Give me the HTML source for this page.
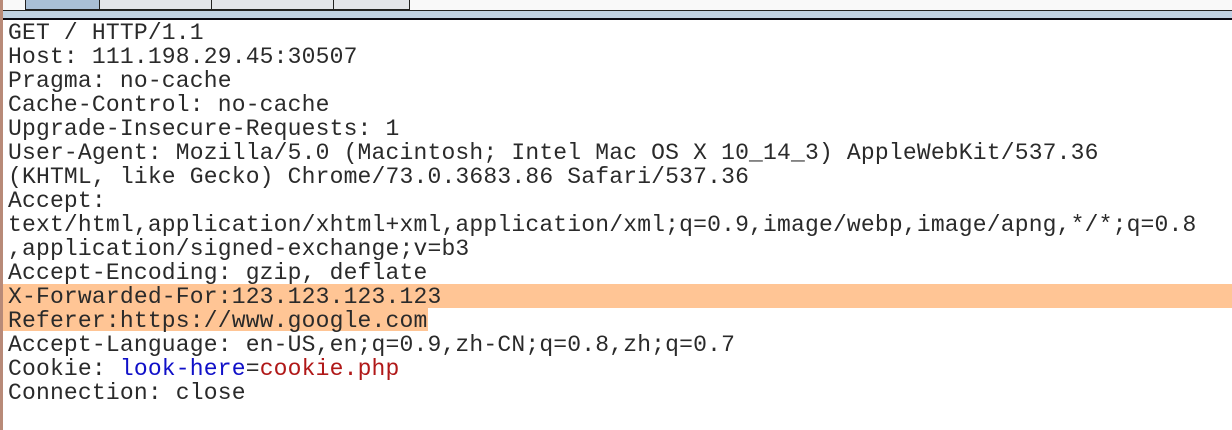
<!DOCTYPE html>
<html><head><style>
body{margin:0;width:1232px;height:430px;background:#fff;position:relative;overflow:hidden}
.top{position:absolute;left:0;top:0;width:1232px;height:10px;background:#f9f9f9}
.bl{position:absolute;left:0;top:10px;width:1232px;height:1px;background:#222}
.band{position:absolute;left:0;top:11px;width:1232px;height:7px;background:#c0d2e4}
.dk{position:absolute;left:0;top:18px;width:1232px;height:2px;background:#0a0a14}
.tab{position:absolute;top:0;height:10px;background:#e3e5ea;border:1px solid #222;border-top:none;box-sizing:border-box}
.left{position:absolute;left:0;top:0;width:3px;height:430px;background:#b88a78}
pre{position:absolute;left:8px;top:21px;margin:0;font:23px/24px "Liberation Mono",monospace;letter-spacing:0.18px;color:#2a2a2a}
.b{color:#1010c8}.r{color:#b01818}
</style></head><body>
<div class="top"></div>
<div class="tab" style="left:25px;width:75px;background:#a9bfd6"></div>
<div class="tab" style="left:99px;width:113px"></div>
<div class="tab" style="left:211px;width:123px"></div>
<div class="tab" style="left:333px;width:77px"></div>
<div class="bl" style="left:3px"></div>
<div class="band"></div>
<div class="dk"></div>
<div class="left"></div>
<div style="position:absolute;left:3px;top:284px;width:1229px;height:24px;background:#ffc595"></div>
<div style="position:absolute;left:3px;top:308px;width:425px;height:23px;background:#ffc595"></div>
<pre>GET / HTTP/1.1
Host: 111.198.29.45:30507
Pragma: no-cache
Cache-Control: no-cache
Upgrade-Insecure-Requests: 1
User-Agent: Mozilla/5.0 (Macintosh; Intel Mac OS X 10_14_3) AppleWebKit/537.36
(KHTML, like Gecko) Chrome/73.0.3683.86 Safari/537.36
Accept:
text/html,application/xhtml+xml,application/xml;q=0.9,image/webp,image/apng,*/*;q=0.8
,application/signed-exchange;v=b3
Accept-Encoding: gzip, deflate
X-Forwarded-For:123.123.123.123
Referer:https://www.google.com
Accept-Language: en-US,en;q=0.9,zh-CN;q=0.8,zh;q=0.7
Cookie: <span class="b">look-here</span>=<span class="r">cookie.php</span>
Connection: close</pre>
</body></html>
